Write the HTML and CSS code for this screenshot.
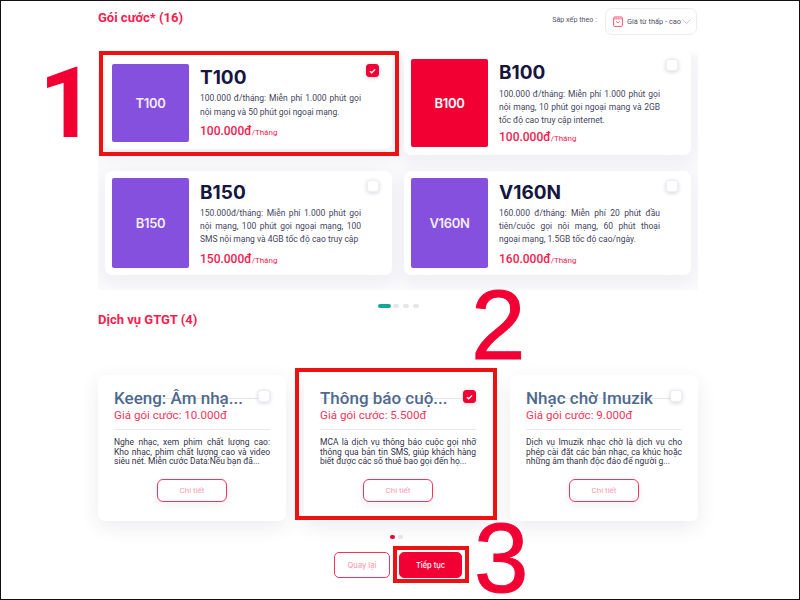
FILE: index.html
```html
<!DOCTYPE html>
<html lang="vi">
<head>
<meta charset="utf-8">
<title>Gói cước</title>
<link rel="stylesheet" href="styles.css">
</head>
<body>
<div class="frame">
  <main class="content">
    <header class="head">
      <h2 class="section-title">Gói cước* (16)</h2>
      <div class="sort">
        <span class="sort-label">Sắp xếp theo :</span>
        <div class="select">
          <svg class="select-icon" viewBox="0 0 10 11" width="10" height="11"><rect x="0.6" y="1" width="8.8" height="9.4" rx="1" fill="#fff" stroke="#f3546f" stroke-width="1"/><rect x="0.6" y="1" width="8.8" height="2.6" fill="#f8a3b3"/><path d="M3 5.2l2 1.8L7 5.2" fill="none" stroke="#f3546f" stroke-width="0.8"/></svg>
          <span class="select-text">Giá từ thấp - cao</span>
          <svg class="chevron" viewBox="0 0 9 5" width="9" height="5"><path d="M0.5 0.5L4.5 4.5L8.5 0.5" fill="none" stroke="#f8a3b3" stroke-width="0.8"/></svg>
        </div>
      </div>
    </header>

    <section class="plans">
      <div class="plan-grid">
        <article class="plan plan-short">
          <div class="thumb purple">T100</div>
          <div class="plan-body">
            <h3 class="plan-name">T100</h3>
            <p class="plan-desc">100.000 đ/tháng: Miễn phí 1.000 phút gọi nội mạng và 50 phút gọi ngoại mạng.</p>
            <p class="plan-price">100.000đ<small>/Tháng</small></p>
          </div>
          <span class="check on"><svg viewBox="0 0 12 12" width="12" height="12"><path d="M3.2 6.2L5.2 8L8.8 4.2" fill="none" stroke="#fff" stroke-width="1.5"/></svg></span>
        </article>
        <article class="plan">
          <div class="thumb red">B100</div>
          <div class="plan-body">
            <h3 class="plan-name">B100</h3>
            <p class="plan-desc">100.000 đ/tháng: Miễn phí 1.000 phút gọi nội mạng, 10 phút gọi ngoại mạng và 2GB tốc độ cao truy cập internet.</p>
            <p class="plan-price">100.000đ<small>/Tháng</small></p>
          </div>
          <span class="check"></span>
        </article>
        <article class="plan plan-tall">
          <div class="thumb purple">B150</div>
          <div class="plan-body">
            <h3 class="plan-name">B150</h3>
            <p class="plan-desc">150.000đ/tháng: Miễn phí 1.000 phút gọi nội mạng, 100 phút gọi ngoại mạng, 100 SMS nội mạng và 4GB tốc độ cao truy cập</p>
            <p class="plan-price">150.000đ<small>/Tháng</small></p>
          </div>
          <span class="check"></span>
        </article>
        <article class="plan plan-tall">
          <div class="thumb purple">V160N</div>
          <div class="plan-body">
            <h3 class="plan-name">V160N</h3>
            <p class="plan-desc">160.000 đ/tháng: Miễn phí 20 phút đầu tiên/cuộc gọi nội mạng, 60 phút thoại ngoại mạng, 1.5GB tốc độ cao/ngày.</p>
            <p class="plan-price">160.000đ<small>/Tháng</small></p>
          </div>
          <span class="check"></span>
        </article>
      </div>
    </section>

    <div class="dots dots-plans">
      <i class="dot teal"></i><i class="dot"></i><i class="dot"></i><i class="dot"></i>
    </div>

    <h2 class="section-title gtgt">Dịch vụ GTGT (4)</h2>

    <section class="services">
      <article class="service">
        <div class="service-top">
          <h3 class="service-name">Keeng: Âm nhạ...</h3>
          <span class="check"></span>
        </div>
        <p class="service-price">Giá gói cước: 10.000đ</p>
        <p class="service-desc">Nghe nhạc, xem phim chất lượng cao: Kho nhạc, phim chất lượng cao và video siêu nét. Miễn cước Data:Nếu bạn đã...</p>
        <button class="detail">Chi tiết</button>
      </article>
      <article class="service">
        <div class="service-top">
          <h3 class="service-name">Thông báo cuộ...</h3>
          <span class="check on"><svg viewBox="0 0 12 12" width="12" height="12"><path d="M3.2 6.2L5.2 8L8.8 4.2" fill="none" stroke="#fff" stroke-width="1.5"/></svg></span>
        </div>
        <p class="service-price">Giá gói cước: 5.500đ</p>
        <p class="service-desc">MCA là dịch vụ thông báo cuộc gọi nhỡ thông qua bản tin SMS, giúp khách hàng biết được các số thuê bao gọi đến họ...</p>
        <button class="detail">Chi tiết</button>
      </article>
      <article class="service">
        <div class="service-top">
          <h3 class="service-name">Nhạc chờ Imuzik</h3>
          <span class="check"></span>
        </div>
        <p class="service-price">Giá gói cước: 9.000đ</p>
        <p class="service-desc">Dịch vụ Imuzik nhạc chờ là dịch vụ cho phép cài đặt các bản nhạc, ca khúc hoặc những âm thanh độc đáo để người g...</p>
        <button class="detail">Chi tiết</button>
      </article>
    </section>

    <div class="dots dots-services">
      <i class="dot round red-dot"></i><i class="dot round"></i>
    </div>

    <div class="actions">
      <button class="btn btn-back">Quay lại</button>
      <button class="btn btn-next">Tiếp tục</button>
    </div>
  </main>

  <div class="mark mark-box-1"></div>
  <div class="mark mark-box-2"></div>
  <div class="mark mark-box-3"></div>
  <span class="num num-1">1</span>
  <span class="num num-2">2</span>
  <span class="num num-3">3</span>
</div>
</body>
</html>
```
FILE: styles.css
```css
* { box-sizing: border-box; }
html, body { margin: 0; padding: 0; background: #fff; }
body { font-family: Roboto, "Liberation Sans", sans-serif; }
h2, h3, p { margin: 0; }

.frame {
  position: relative;
  width: 800px;
  height: 600px;
  overflow: hidden;
  border: 1px solid #111;
  background: #fff;
}

.content {
  width: 600px;
  margin-left: 97px;
  display: flex;
  flex-direction: column;
}

.head {
  height: 49px;
  padding-top: 7px;
  padding-right: 1px;
  display: flex;
  justify-content: space-between;
  align-items: flex-start;
}
.section-title {
  font-size: 13px;
  font-weight: 700;
  color: #f5204f;
  line-height: 18px;
  padding-top: 1px;
}
.sort { display: flex; align-items: center; gap: 8px; }
.sort-label { font-size: 7.2px; color: #55566e; margin-top: -5px; }
.select {
  width: 92px;
  height: 27px;
  border: 1px solid #ececf1;
  border-radius: 7px;
  display: flex;
  align-items: center;
  padding-left: 7px;
  gap: 4px;
}
.select-icon { flex: none; }
.select-text { font-size: 7.4px; color: #50506a; white-space: nowrap; }
.chevron { flex: none; margin-left: -3px; }

.plans {
  height: 240px;
  padding: 0 7px;
  overflow: hidden;
  background: linear-gradient(#fff, #f9f9fc 4%, #f9f9fc 96%, #fbfbfd);
}
.plan-grid {
  display: grid;
  grid-template-columns: 287px 287px;
  grid-template-rows: 105px 104px;
  column-gap: 12px;
  row-gap: 16px;
}
.plan {
  position: relative;
  display: flex;
  gap: 11px;
  padding: 9px 31px 0 7px;
  background: #fff;
  border-radius: 7px;
  box-shadow: 0 6px 18px rgba(40, 40, 90, 0.06);
}
.plan-short {
  height: 95px;
  margin-top: 4px;
  padding-top: 10px;
}
.plan-short .thumb { height: 78px; }
.plan-short .plan-name { margin-bottom: 0; }
.plan-short .plan-desc { line-height: 14px; }
.plan-short .plan-price { margin-top: 3px; }
.plan-short .check { top: 10px; }
.plan-tall { padding-top: 7px; }
.plan-tall .thumb { height: 90px; }
.plan-tall .plan-name { margin: 2px 0 1px; }
.plan-tall .plan-price { margin-top: 5px; }
.plan-tall .check { top: 9px; }
.thumb {
  flex: none;
  width: 77px;
  height: 88px;
  border-radius: 2px;
  display: flex;
  align-items: center;
  justify-content: center;
  font-family: Inter, "Open Sans", sans-serif;
  font-size: 13px;
  font-weight: 600;
  letter-spacing: -0.3px;
  color: #f2ecfb;
}
.purple { background: #8450dd; }
.red { background: #f20034; color: #fff; }
.plan-body { flex: 1; min-width: 0; }
.plan-name {
  font-family: Inter, "Open Sans", sans-serif;
  font-size: 19px;
  font-weight: 700;
  line-height: 26px;
  margin: 1px 0 2px;
  color: #16163f;
}
.plan-desc {
  font-size: 8.5px;
  line-height: 12.8px;
  color: #45455c;
  text-align: justify;
}
.plan-price {
  font-size: 12px;
  font-weight: 500;
  color: #f5204f;
  line-height: 18px;
  margin-top: 2px;
}
.plan-price small { font-size: 8px; font-weight: 400; }

.check {
  position: absolute;
  top: 9px;
  right: 13px;
  width: 12px;
  height: 12px;
  border-radius: 3px;
  background: #fff;
  border: 1px solid #eeeef3;
  box-shadow: 0 1px 4px rgba(40, 40, 90, 0.2);
  display: flex;
  align-items: center;
  justify-content: center;
}
.check.on { width: 13px; height: 13px; background: #f20034; border-color: #f20034; }

.dots { display: flex; justify-content: flex-start; align-items: center; }
.dot {
  display: block;
  width: 6px;
  height: 4px;
  border-radius: 2px;
  background: #e6e6ea;
}
.dots-plans {
  height: 4px;
  margin-top: 14px;
  gap: 4px;
  margin-left: 280px;
}
.dot.teal { width: 13px; background: #12a79a; margin-right: -2px; }
.gtgt { margin-top: 2px; }

.services {
  display: flex;
  gap: 18px;
  margin-top: 46px;
}
.service {
  position: relative;
  flex: none;
  width: 188px;
  height: 146px;
  padding: 13px 16px 0;
  background: #fff;
  border-radius: 7px;
  box-shadow: 0 6px 20px rgba(40, 40, 90, 0.09);
  display: flex;
  flex-direction: column;
}
.service-top { position: relative; height: 19px; }
.service-top::before {
  content: "";
  position: absolute;
  left: 0;
  right: 8px;
  top: 10px;
  height: 1px;
  background: #e4e6ec;
}
.service-top .check { top: 2px; right: 0; }
.service-name {
  position: relative;
  font-size: 17px;
  font-weight: 500;
  line-height: 21px;
  color: #4f6a8c;
  white-space: nowrap;
}
.service-price {
  font-size: 11.6px;
  color: #f5345c;
  line-height: 16px;
  padding-bottom: 6px;
  border-bottom: 1px solid #e8e8ec;
}
.service-desc {
  font-size: 8.5px;
  line-height: 9.5px;
  color: #33334a;
  text-align: justify;
  margin-top: 8px;
  height: 29px;
}
.detail {
  display: block;
  align-self: center;
  width: 70px;
  height: 23px;
  margin-top: 12px;
  padding: 0;
  border: 1px solid #f0365f;
  border-radius: 6px;
  background: #fff;
  color: #fb9db3;
  font-family: inherit;
  font-size: 8px;
  box-shadow: 0 3px 8px rgba(40, 40, 90, 0.07);
}

.dots-services { height: 4px; margin-top: 14px; gap: 3px; margin-left: 292px; }
.dot.round { width: 5px; height: 4px; }
.dot.red-dot { background: #f20034; }

.actions {
  display: flex;
  justify-content: flex-start;
  gap: 9px;
  margin-top: 13px;
  margin-left: 236px;
}
.btn {
  height: 26px;
  padding: 0;
  border-radius: 5px;
  font-family: Inter, "Open Sans", sans-serif;
  font-size: 7.5px;
  font-weight: 500;
}
.btn-back { width: 56px; background: #fff; border: 1px solid #f0365f; color: #f8a3b3; }
.btn-next { width: 63px; background: #f20034; border: 1px solid #f20034; color: #fff; }

.mark { position: absolute; border: 4px solid #ee1111; }
.mark-box-1 { left: 98px; top: 50px; width: 300px; height: 105px; }
.mark-box-2 { left: 294px; top: 367px; width: 202px; height: 152px; }
.mark-box-3 { left: 392px; top: 545px; width: 76px; height: 37px; }

.num {
  position: absolute;
  font-family: "Liberation Sans", Arial, sans-serif;
  font-size: 98px;
  line-height: 82px;
  color: #f20034;
  -webkit-text-stroke: 1px #f20034;
}
.num-1 { left: 38px; top: 62px; font-family: Roboto, sans-serif; font-weight: 700; -webkit-text-stroke: 0; }
.num-2 { left: 470px; top: 283px; }
.num-3 { left: 473px; top: 516px; }
```
